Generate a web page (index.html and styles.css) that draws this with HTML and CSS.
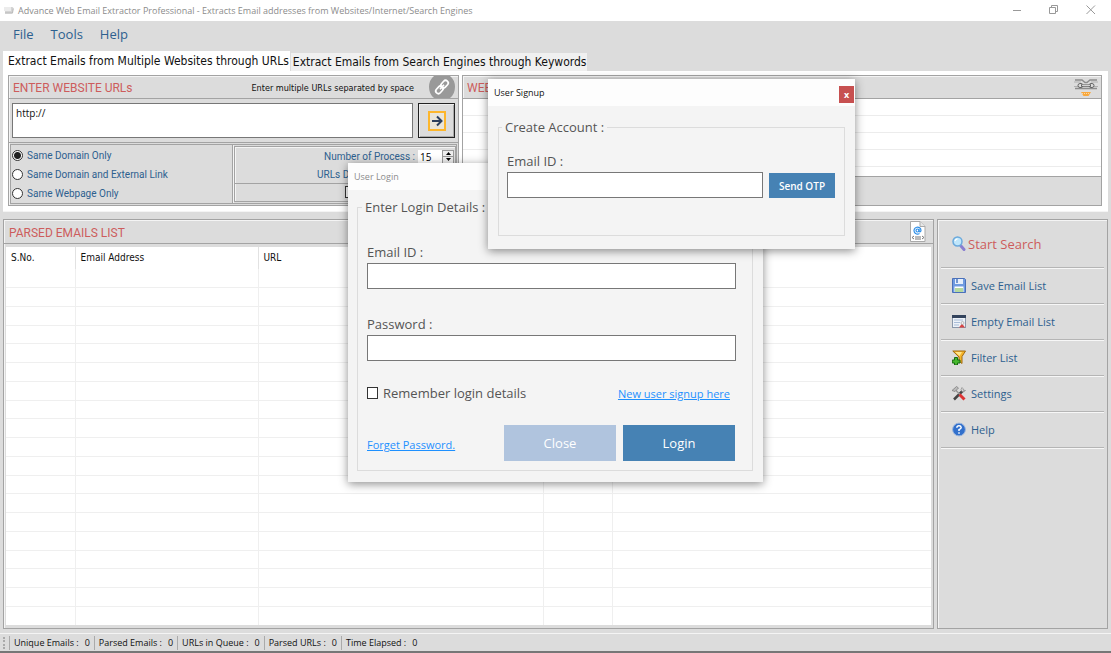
FILE: index.html
```
<!DOCTYPE html>
<html lang="en">
<head>
<meta charset="utf-8">
<title>Advance Web Email Extractor Professional</title>
<link rel="stylesheet" href="styles.css">
</head>
<body>
<div class="app">
  <header class="titlebar">
    <svg class="app-icon" width="10" height="9" viewBox="0 0 10 9"><path d="M1 1h7.500l1 1-1 5.500H1z" fill="#d4d4d4"/><path d="M0 1h7v4H0z" fill="#ececec"/><path d="M1 7h7.500l.8-4.500" fill="none" stroke="#b9b9b9"/></svg>
    <span class="title">Advance Web Email Extractor Professional - Extracts Email addresses from Websites/Internet/Search Engines</span>
    <div class="window-buttons">
      <button aria-label="Minimize"><svg width="10" height="10" viewBox="0 0 10 10"><path d="M1 5.500h8" stroke="#999"/></svg></button>
      <button aria-label="Restore"><svg width="10" height="10" viewBox="0 0 10 10"><path d="M.5 2.500h6v6h-6zM2.500 2.500v-2h6v6h-2" fill="none" stroke="#999"/></svg></button>
      <button aria-label="Close window"><svg width="10" height="10" viewBox="0 0 10 10"><path d="M.5.500l8.500 8.500M9 .5L.5 9" stroke="#999"/></svg></button>
    </div>
  </header>

  <nav class="menu">
    <button>File</button><button>Tools</button><button>Help</button>
  </nav>

  <div class="tabs" role="tablist">
    <button class="tab active" role="tab" aria-selected="true">Extract Emails from Multiple Websites through URLs</button>
    <button class="tab" role="tab" aria-selected="false">Extract Emails from Search Engines through Keywords</button>
  </div>

  <section class="tab-page">
    <div class="panel input-panel">
      <div class="panel-head">
        <h2>ENTER WEBSITE URLs</h2>
        <span class="note">Enter multiple URLs separated by space</span>
        <svg class="link-icon" width="26" height="22" viewBox="0 0 26 22"><path d="M5 0h16Q26 4 26 11T21 22H5Q0 18 0 11T5 0z" fill="#999"/><g transform="translate(13 11) rotate(-48)" fill="none" stroke="#fff" stroke-width="1.700"><rect x="-8" y="-2.600" width="8.500" height="5.200" rx="2.600"/><rect x="-.5" y="-2.600" width="8.500" height="5.200" rx="2.600"/><path d="M-3 0h6"/></g></svg>
      </div>
      <div class="url-row">
        <textarea class="url-box" aria-label="Website URLs">http://</textarea>
        <button class="go" aria-label="Start extraction"><svg width="18" height="20" viewBox="0 0 18 20"><rect x="1" y="1" width="16" height="18" fill="#e9e5d9" stroke="#fdb62b" stroke-width="2"/><path d="M4 10h9M9 5.500l4.500 4.500L9 14.500" fill="none" stroke="#2c3f5c" stroke-width="2"/></svg></button>
      </div>
      <div class="options">
        <div class="radios">
          <label><input type="radio" name="scope" checked>Same Domain Only</label>
          <label><input type="radio" name="scope">Same Domain and External Link</label>
          <label><input type="radio" name="scope">Same Webpage Only</label>
        </div>
        <div class="limits">
          <div class="limit-fields">
            <div class="limit"><label for="processes">Number of Process :</label>
              <span class="spinner"><input id="processes" type="text" value="15"><span class="arrows"><button aria-label="Increase"><svg width="5" height="3" viewBox="0 0 5 3"><path d="M0 3L2.500 0 5 3z"/></svg></button><button aria-label="Decrease"><svg width="5" height="3" viewBox="0 0 5 3"><path d="M0 0L2.500 3 5 0z"/></svg></button></span></span>
            </div>
            <div class="limit"><span class="depth">URLs D</span></div>
          </div>
          <div class="limit-check"><input type="checkbox" aria-label="Limit"></div>
        </div>
      </div>
    </div>

    <div class="panel result-panel">
      <div class="panel-head">
        <h2>WEB</h2>
        <svg class="chain-icon" width="24" height="19" viewBox="0 0 24 19"><g fill="none"><path d="M1 2h7l3 2.500h2L16 2h7M1 10.500h22" stroke="#8c8c8c" stroke-width="1.400"/><path d="M0 4h7M17 4h7M0 8.500h4M20 8.500h4" stroke="#b0b0b0"/><rect x="4" y="5.500" width="5" height="4" rx="2" stroke="#666"/><rect x="15" y="5.500" width="5" height="4" rx="2" stroke="#666"/><path d="M7 7.500h10" stroke="#666" stroke-width="2.500"/><path d="M8 7.300h8" stroke="#eee"/></g><path d="M7 14h10l-2.500 4h-5z" fill="#f9a83c"/><path d="M8 15.500h8" stroke="#fbd9a6" stroke-dasharray="1 1"/></svg>
      </div>
      <div class="result-list"><div></div><div></div><div></div><div></div></div>
      <div class="result-foot"></div>
    </div>
  </section>

  <main class="lower">
    <section class="panel parsed">
      <div class="panel-head">
        <h2>PARSED EMAILS LIST</h2>
        <svg class="export-icon" width="16" height="21" viewBox="0 0 16 21"><path d="M.5.500h9.500l5 5v15H.5z" fill="#fff" stroke="#a9a9a9"/><path d="M10 .5v5h5" fill="#e6e6e6" stroke="#a9a9a9"/><circle cx="7.500" cy="9.500" r="1.500" fill="none" stroke="#2e8fe8" stroke-width="1.200"/><path d="M9 8v2.500q1.500 1 2-1a3.500 3.500 0 1 0-1.500 3" fill="none" stroke="#2e8fe8" stroke-width="1.200"/><path d="M4 15l-2 1.500 2 1.500M12 15l2 1.500-2 1.500M5 16h6M5 18h6" fill="none" stroke="#777"/></svg>
      </div>
      <div class="table-wrap">
        <table>
          <colgroup><col class="c1"><col class="c2"><col class="c3"><col class="c4"><col></colgroup>
          <thead><tr><th>S.No.</th><th>Email Address</th><th>URL</th><th></th><th></th></tr></thead>
          <tbody>
            <tr><td></td><td></td><td></td><td></td><td></td></tr>
            <tr><td></td><td></td><td></td><td></td><td></td></tr>
            <tr><td></td><td></td><td></td><td></td><td></td></tr>
            <tr><td></td><td></td><td></td><td></td><td></td></tr>
            <tr><td></td><td></td><td></td><td></td><td></td></tr>
            <tr><td></td><td></td><td></td><td></td><td></td></tr>
            <tr><td></td><td></td><td></td><td></td><td></td></tr>
            <tr><td></td><td></td><td></td><td></td><td></td></tr>
            <tr><td></td><td></td><td></td><td></td><td></td></tr>
            <tr><td></td><td></td><td></td><td></td><td></td></tr>
            <tr><td></td><td></td><td></td><td></td><td></td></tr>
            <tr><td></td><td></td><td></td><td></td><td></td></tr>
            <tr><td></td><td></td><td></td><td></td><td></td></tr>
            <tr><td></td><td></td><td></td><td></td><td></td></tr>
            <tr><td></td><td></td><td></td><td></td><td></td></tr>
            <tr><td></td><td></td><td></td><td></td><td></td></tr>
            <tr><td></td><td></td><td></td><td></td><td></td></tr>
            <tr><td></td><td></td><td></td><td></td><td></td></tr>
            <tr><td></td><td></td><td></td><td></td><td></td></tr>
          </tbody>
        </table>
      </div>
    </section>

    <aside class="panel actions">
      <button class="primary"><svg width="14" height="15" viewBox="0 0 14 15"><path d="M9 10l3 3.500" stroke="#8a7fd0" stroke-width="3" stroke-linecap="round"/><circle cx="5.500" cy="5.500" r="4.500" fill="#bfe6fb" stroke="#6aa9dc" stroke-width="1.500"/><path d="M3 5q.5-2 2.500-2.200" stroke="#fff" fill="none" stroke-width="1.200"/></svg>Start Search</button>
      <button><svg width="14" height="15" viewBox="0 0 14 15"><path d="M.5.500h12l1 1v13H.5z" fill="#6f9be0" stroke="#4a70b8"/><rect x="3" y="1" width="8" height="5" fill="#e6effb"/><path d="M5 1v4" stroke="#4a78c2" stroke-width="1.500"/><rect x="2.500" y="8.500" width="9" height="5.500" fill="#fff"/><path d="M3 11h8M3 13h8" stroke="#9ccb80" stroke-width="1.500"/></svg>Save Email List</button>
      <button><svg width="14" height="15" viewBox="0 0 14 15"><rect x=".5" y="1.500" width="13" height="12" fill="#edf2f8" stroke="#8a98ab"/><path d="M0 2.500h14" stroke="#33435c" stroke-width="3"/><path d="M2 6h9M2 8.500h6M2 11h5" stroke="#a9bdd8"/><path d="M7 13.500l3-4 3 4z" fill="#d84444"/><circle cx="10.500" cy="9" r="1.500" fill="#eee" stroke="#999" stroke-width=".6"/></svg>Empty Email List</button>
      <button><svg width="14" height="15" viewBox="0 0 14 15"><path d="M.8 1h12.700L10 6.500v7L7 11V7z" fill="#f6b52b" stroke="#a16a10"/><path d="M3 2h7L7.500 6z" fill="#ffe58a"/><path d="M2.500 7.500h3V10H8v3H5.500v2h-3v-2H.3v-3h2.200z" fill="#46b82d" stroke="#176a10"/></svg>Filter List</button>
      <button><svg width="14" height="15" viewBox="0 0 14 15"><path d="M11.500 4L2 13.500" stroke="#444" stroke-width="2.500"/><path d="M10 1.500q-2 2 0 4 2 1 3.500-1l-2-.3-.6-1.700z" fill="#d8d8d8" stroke="#888" stroke-width=".7"/><path d="M3 3.500l6 6" stroke="#999" stroke-width="1.500"/><path d="M0 4.500L4.500.500 6.500 2 3 5.500z" fill="#bbb" stroke="#777" stroke-width=".7"/><path d="M7.500 8.500l5 5" stroke="#d33" stroke-width="3"/></svg>Settings</button>
      <button><svg width="14" height="15" viewBox="0 0 14 15"><circle cx="7" cy="7.500" r="6.400" fill="#3270cc" stroke="#9bb5dc"/><path d="M4.800 5.800Q5 3.800 7 3.800t2.200 1.700Q9.200 6.800 7 7.600V9M7 10.300v1.500" fill="none" stroke="#fff" stroke-width="1.500"/></svg>Help</button>
    </aside>
  </main>

  <footer class="status">
    <span class="grip"></span>
    <span class="stat">Unique Emails :<b>0</b></span>
    <span class="stat">Parsed Emails :<b>0</b></span>
    <span class="stat">URLs in Queue :<b>0</b></span>
    <span class="stat">Parsed URLs :<b>0</b></span>
    <span class="stat">Time Elapsed :<b>0</b></span>
  </footer>
</div>

<form class="window login" aria-label="User Login">
  <div class="window-title">User Login</div>
  <fieldset>
    <legend>Enter Login Details :</legend>
    <label for="login-email">Email ID :</label>
    <input class="field" id="login-email" type="text">
    <label class="second" for="login-password">Password :</label>
    <input class="field" id="login-password" type="password">
    <div class="remember-row">
      <label class="remember"><input type="checkbox">Remember login details</label>
      <a href="#signup">New user signup here</a>
    </div>
    <div class="button-row">
      <a href="#forgot">Forget Password.</a>
      <button type="button" class="pale">Close</button>
      <button type="button">Login</button>
    </div>
  </fieldset>
</form>

<form class="window signup" id="signup" aria-label="User Signup">
  <div class="window-title">User Signup<button type="button" class="close" aria-label="Close">x</button></div>
  <fieldset>
    <legend>Create Account :</legend>
    <label for="signup-email">Email ID :</label>
    <div class="otp-row">
      <input class="field" id="signup-email" type="text">
      <button type="button">Send OTP</button>
    </div>
  </fieldset>
</form>
</body>
</html>
```
FILE: styles.css
```
* { box-sizing: border-box; }
body { margin: 0; background: #dcdcdc; font-family: "Open Sans", "Noto Sans", sans-serif; color: #111; }
button { font: inherit; border: 0; padding: 0; background: none; color: inherit; }
h2 { margin: 2px 0 0; font: 12px/16px Roboto, sans-serif; color: #cd5c5c; }
svg { display: block; flex: none; }

.app { min-height: 100vh; display: flex; flex-direction: column; }

.titlebar { height: 21px; background: #fff; display: flex; align-items: center; padding: 0 15px 0 4px; gap: 4px; }
.title { flex: 1; font-size: 9px; line-height: 14px; color: #8c8c8c; white-space: nowrap; }
.window-buttons { display: flex; gap: 27px; padding-bottom: 2px; }

.menu { height: 30px; display: flex; align-items: center; gap: 17px; padding: 0 13px 4px; font-size: 13px; color: #2d608f; }

.tabs { display: flex; align-items: flex-end; padding-left: 3px; height: 20px; }
.tab { font: 12px/18px "DejaVu Sans Condensed", "DejaVu Sans", sans-serif; font-stretch: condensed; background: #f0f0f0; height: 18px; padding: 0 1px 0 2px; margin-left: 1px; white-space: nowrap; }
.tab.active { background: #fff; height: 20px; padding: 0 1px 0 5px; margin: 0; }

.tab-page { margin: 0 3px; padding: 4px 6px 5px 5px; background: #fff; border-bottom: 1px solid #f4f4f4; display: grid; grid-template-columns: 451px 1fr; gap: 3px; height: 141px; }
.panel { border: 1px solid #a3a3a3; box-shadow: inset 1px 1px #f4f4f4; background: #dcdcdc; display: flex; flex-direction: column; min-width: 0; }
.panel-head { display: flex; align-items: center; justify-content: space-between; height: 23px; padding: 0 3px 0 4px; border-bottom: 1px solid #a3a3a3; }
.note { margin: 2px 15px 0 auto; font: 9px/12px "DejaVu Sans Condensed", "DejaVu Sans", sans-serif; font-stretch: condensed; }
.url-row { display: flex; gap: 5px; padding: 4px 3px; height: 44px; border-bottom: 1px solid #a3a3a3; }
.url-box { flex: 1; resize: none; border: 1px solid #777; background: #fff; margin: 0; padding: 2px 3px; font: 10px/14px "Open Sans", sans-serif; color: #111; }
.go { width: 37px; border: 1px solid #222; box-shadow: inset 1px 1px #eee, inset -1px -1px #aaa; display: grid; place-items: center; }

.options { flex: 1; margin: 1px; border: 1px solid #a3a3a3; display: grid; grid-template-columns: 222px 1fr; color: #2d608f; font: 10px/14px Roboto, sans-serif; }
.radios { display: flex; flex-direction: column; padding: 1px 0 0 1px; border-right: 1px solid #a3a3a3; box-shadow: 1px 0 #f4f4f4; }
.radios label { display: flex; align-items: center; gap: 4px; height: 19px; }
.radios input { appearance: none; width: 11px; height: 11px; margin: 0; border: 1px solid #333; border-radius: 50%; background: #fff; }
.radios input:checked { background: radial-gradient(circle, #222 0 3px, #fff 4px); }
.limits { margin: 1px 0 1px 1px; border: 1px solid #a3a3a3; box-shadow: inset 1px 1px #f4f4f4; display: flex; flex-direction: column; }
.limit-fields { height: 37px; border-bottom: 1px solid #a3a3a3; }
.limit { display: flex; justify-content: flex-end; align-items: center; gap: 3px; height: 18px; padding: 1px 1px 0; }
.spinner { display: flex; width: 36px; height: 14px; background: #fff; }
.spinner input { width: 24px; border: 0; padding: 0 2px; background: #fff; font: 10px/14px "Open Sans", sans-serif; }
.arrows { width: 12px; display: grid; grid-template-rows: 1fr 1fr; background: #999; gap: 1px; padding: 1px; }
.arrows button { background: #eee; display: grid; place-items: center; }
.depth { width: 137px; }
.limit-check { padding: 2px 0 0 110px; }
.limit-check input { appearance: none; display: block; width: 12px; height: 12px; margin: 0; border: 1px solid #333; background: #fff; }

.result-list { height: 77px; background: #fff; }
.result-list div { height: 17px; border-bottom: 1px solid #ececec; }
.result-foot { flex: 1; border-top: 1px solid #a3a3a3; }

.lower { flex: 1; display: grid; grid-template-columns: 1fr 171px; gap: 3px; margin: 7px 3px 0; }
.parsed .panel-head { height: 24px; padding: 0 7px 0 5px; }
.table-wrap { flex: 1; margin: 3px 2px; background: #fff; display: flex; overflow: hidden; }
table { width: 100%; border-collapse: collapse; table-layout: fixed; }
.c1 { width: 69px; }
.c2 { width: 183px; }
.c3 { width: 285px; }
.c4 { width: 69px; }
th { height: 22px; padding: 0 5px; text-align: left; font: 10px/14px "DejaVu Sans Condensed", "DejaVu Sans", sans-serif; font-stretch: condensed; border-right: 1px solid #e2e2e2; }
td { height: 18px; padding: 0; border-right: 1px solid #efefef; border-bottom: 1px solid #efefef; }
th:last-child, td:last-child { border-right: 0; }
tr:last-child td { border-bottom: 0; }

.actions { padding: 0 3px; }
.actions button { height: 36px; display: flex; align-items: center; gap: 5px; padding: 0 11px; border-bottom: 1px solid #b5b5b5; box-shadow: 0 1px #f7f7f7; font-size: 11px; color: #2d608f; text-align: left; }
.actions .primary { height: 48px; gap: 2px; font-size: 13px; color: #cd5c5c; }

.status { height: 20px; margin-top: 4px; display: flex; align-items: center; padding: 0 3px; background: #dcdcdc; border-top: 1px solid #f4f4f4; border-bottom: 2px solid #777; font-size: 9px; line-height: 14px; }
.grip { width: 3px; height: 12px; border-left: 2px dotted #aaa; margin-right: 3px; }
.stat { padding: 0 4px; border-left: 1px solid #aaa; white-space: nowrap; }
.stat b { font-weight: 400; margin-left: 6px; }

.window { position: absolute; background: #f4f4f4; box-shadow: 0 2px 9px rgba(0, 0, 0, .45); color: #555; font-size: 13px; line-height: 18px; }
.window-title { height: 27px; padding: 0 6px; display: flex; align-items: center; background: #fdfdfd; font-size: 9px; line-height: 14px; }
.window fieldset { border: 1px solid #dcdcdc; margin: 8px 10px 0 9px; padding: 0 16px 0 9px; min-width: 0; }
.window legend { padding: 0 3px; margin-left: -5px; }
.window fieldset > label { display: block; }
.field { display: block; width: 100%; height: 26px; border: 1px solid #777; background: #fff; padding: 0 4px; margin-top: 2px; font: 12px "Open Sans", sans-serif; }
.window a { color: #1e90ff; font-size: 11px; }
.window fieldset button { background: #4682b4; color: #fff; }
.window fieldset .pale { background: #b0c4de; }

.login { left: 348px; top: 163px; width: 415px; height: 319px; }
.login .window-title { color: #8c8c8c; }
.login fieldset { height: 273px; padding-top: 27px; }
.login .second { margin-top: 26px; }
.remember-row { display: flex; justify-content: space-between; align-items: center; margin-top: 22px; padding-right: 6px; }
.remember-row a { padding-top: 2px; }
.remember { display: flex; align-items: center; gap: 5px; }
.remember input { appearance: none; width: 11px; height: 12px; margin: 0; border: 1px solid #333; background: #fff; }
.button-row { display: flex; gap: 7px; align-items: center; margin-top: 22px; padding-right: 1px; }
.button-row a { margin-right: auto; padding-top: 4px; }
.button-row button { width: 112px; height: 36px; }

.signup { left: 488px; top: 79px; width: 367px; height: 170px; }
.signup .window-title { color: #111; padding-right: 1px; }
.signup fieldset { height: 118px; padding: 16px 9px 0 8px; margin: 12px 10px 0; }
.close { margin: 4px 0 0 auto; width: 15px; height: 17px; background: #c75050; color: #fff; font-weight: 700; }
.otp-row { display: flex; gap: 6px; align-items: flex-end; }
.otp-row .field { flex: 1; }
.window .otp-row button { width: 66px; height: 25px; font-size: 10px; font-weight: 600; }
```
